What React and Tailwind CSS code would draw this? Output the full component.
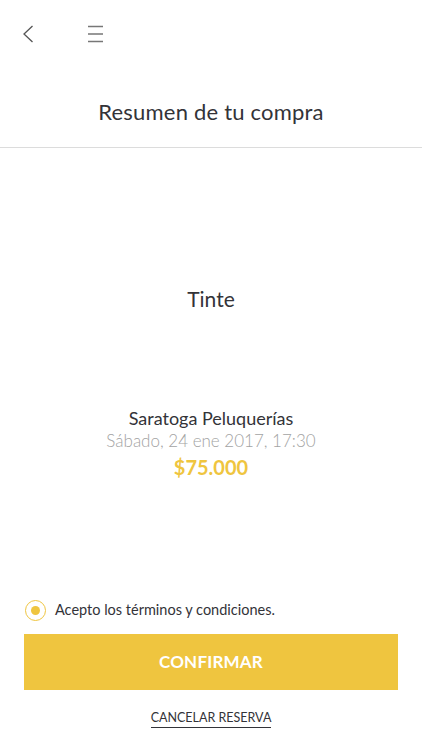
import React, { useState } from "react";

const App = () => {
  const [accepted, setAccepted] = useState(true);

  return (
    <div
      className="flex flex-col w-full h-[750px] bg-white text-[#333338]"
      style={{ fontFamily: "Lato, 'Open Sans', sans-serif" }}
    >
      {/* top bar */}
      <div className="flex items-center h-[68px] pl-[22px]">
        <button className="w-[12px] h-[18px] flex items-center">
          <svg width="12" height="18" viewBox="0 0 12 18" fill="none">
            <path d="M10.5 1 L2 9 L10.5 17" stroke="#555" strokeWidth="1.3" />
          </svg>
        </button>
        <button className="ml-[54px] w-[16px] h-[18px] flex items-center">
          <svg width="16" height="18" viewBox="0 0 16 18" fill="none">
            <path d="M0 1.5 H15 M0 9 H15 M0 16.5 H15" stroke="#777" strokeWidth="1.3" />
          </svg>
        </button>
      </div>

      <div className="flex items-center justify-center h-[80px] pt-[8px] border-b border-[#dcdcdc]">
        <h1 className="text-[22px] tracking-[0.2px] text-[#333338]">
          Resumen de tu compra
        </h1>
      </div>

      <div className="flex flex-col items-center flex-1">
        <p className="mt-[135px] text-[21px] text-[#333338]">Tinte</p>

        <p className="mt-[91px] text-[18px] leading-[24px] text-[#333338]">Saratoga Peluquerías</p>
        <p className="text-[17px] font-light text-[#a3a3a3] leading-[22px]">
          Sábado, 24 ene 2017, 17:30
        </p>
        <p className="text-[20px] font-bold text-[#efc53f] leading-[30px]">$75.000</p>
      </div>

      <div className="flex flex-col px-[24px] pb-[22px]">
        <label
          className="flex items-center gap-[9px] pl-[1px] mb-[13px] cursor-pointer"
          onClick={() => setAccepted(!accepted)}
        >
          <span className="w-[21px] h-[21px] rounded-full border-[1.7px] border-[#efc53f] flex items-center justify-center">
            {accepted && <span className="w-[9px] h-[9px] rounded-full bg-[#efc53f]" />}
          </span>
          <span className="text-[14.5px] text-[#333338]">Acepto los términos y condiciones.</span>
        </label>

        <button className="w-full h-[56px] bg-[#efc53f] text-white text-[17px] font-bold tracking-[0.2px]">
          CONFIRMAR
        </button>

        <div className="flex justify-center mt-[20px]">
          <button className="text-[12.5px] text-[#333338] border-b-[1.5px] border-[#333338] leading-[16px] pb-[1px]">
            CANCELAR RESERVA
          </button>
        </div>
      </div>
    </div>
  );
};

export default App;
